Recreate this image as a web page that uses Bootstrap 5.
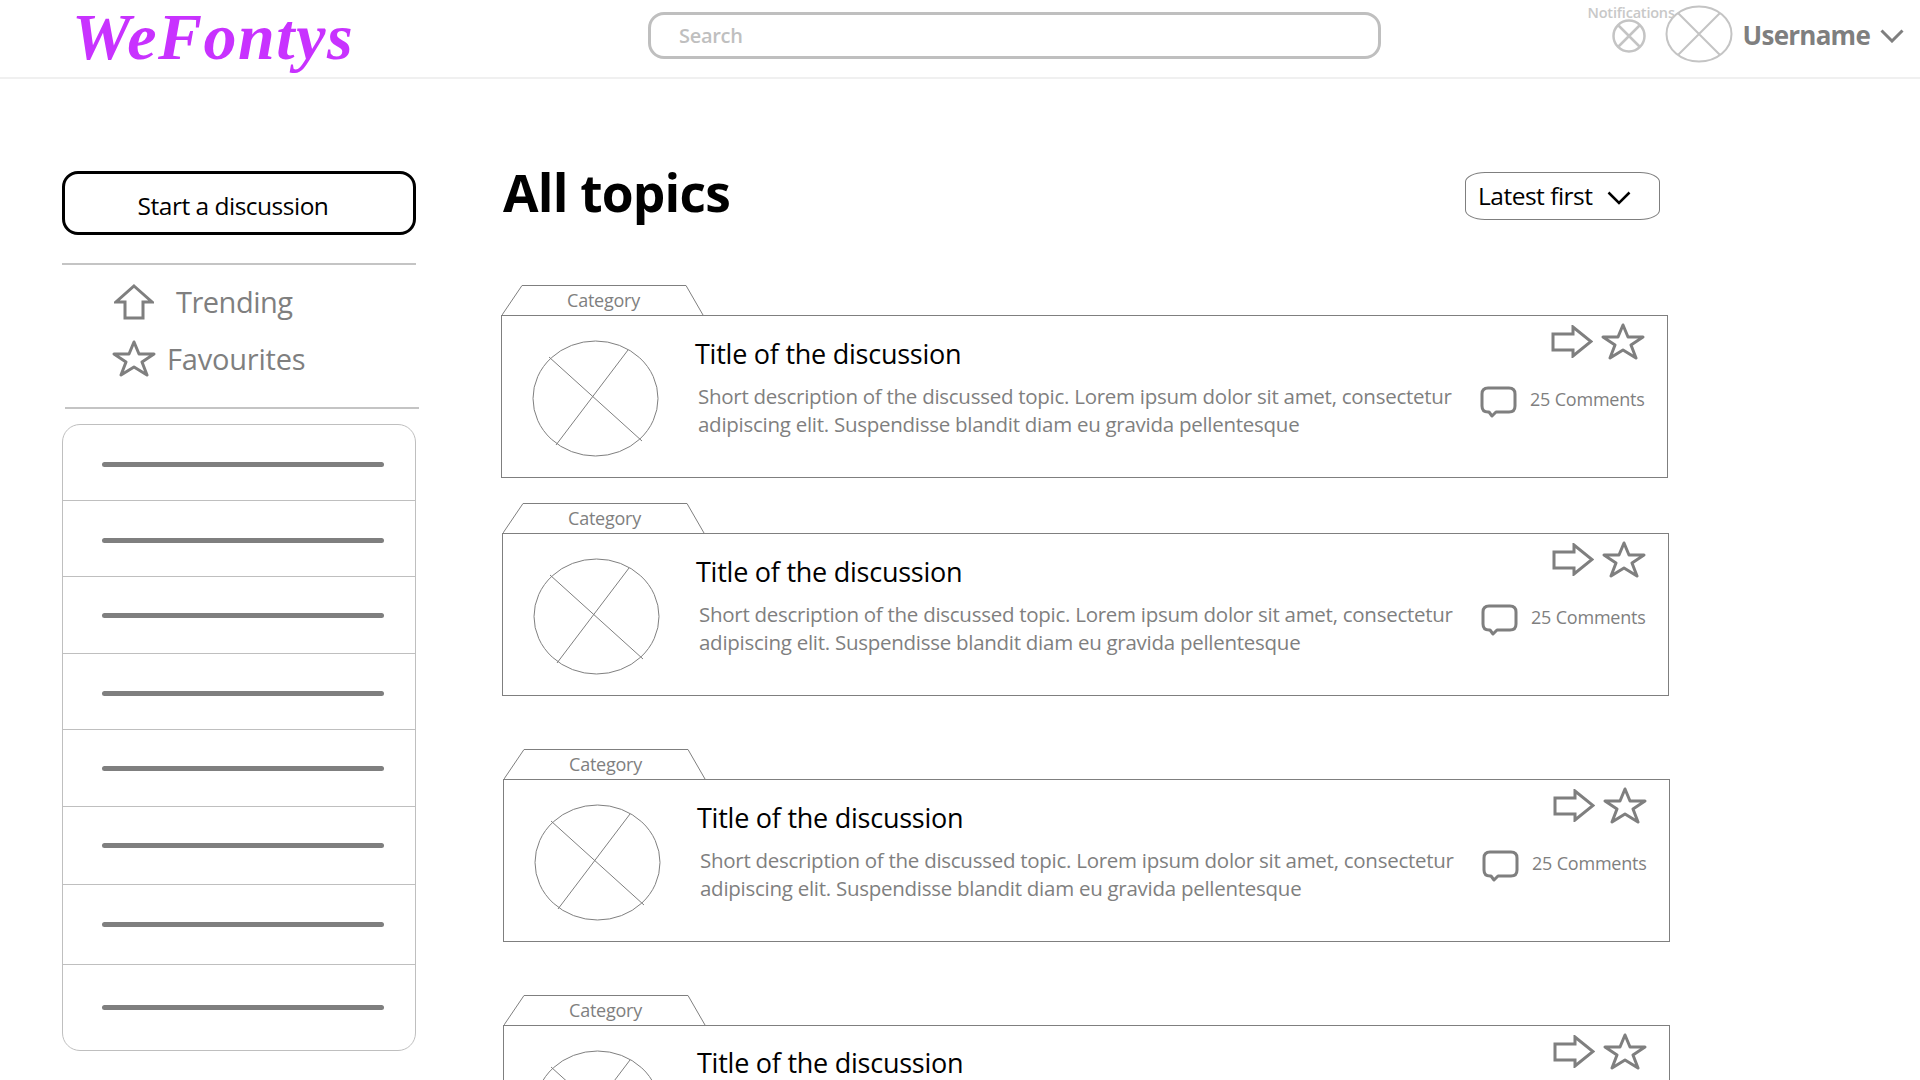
<!DOCTYPE html>
<html lang="en">
<head>
<meta charset="utf-8">
<title>WeFontys</title>
<link rel="stylesheet" href="https://cdn.jsdelivr.net/npm/bootstrap@5.3.0/dist/css/bootstrap.min.css">
<style>
html,body{height:1080px;overflow:hidden;background:#fff}
body{font-family:"Open Sans","Noto Sans",sans-serif;color:#000}
.topbar{height:79px;border-bottom:2px solid #f0f0f0;padding:0 16px 6px 0}
.brand-box{width:579px;margin-left:72px;align-self:flex-start}
.brand-text{font-family:"Liberation Serif",serif;font-style:italic;font-weight:700;font-size:66px;line-height:74px;letter-spacing:1.500px;color:#c832ff;display:block}
.search-box{width:733px;height:47px;border:3px solid #bfbfbf;border-radius:16px;padding-left:28px;color:#bfbfbf;font-size:20px;font-weight:600;letter-spacing:-.3px;margin-left:-3px}
.notif-wrap{width:34px;height:34px}
.notif-label{top:-15px;left:-24px;font-size:14.5px;line-height:18px;font-weight:600;color:#c8c8c8;letter-spacing:-.2px}
.avatar-top{margin:-4px 0 0 19px}
.user-name{font-size:26px;font-weight:700;color:#7f7f7f;margin-left:10px;letter-spacing:-.75px}
.chev-top{margin-left:10px}
.side-col{width:354px;margin-left:62px;padding-top:92px}
.start-btn{height:64px;border:3px solid #000;border-radius:16px;font-size:24.5px;letter-spacing:-.5px;background:#fff;color:#000;padding:6px 12px 0 0}
.side-rule{height:2px;background:#c4c4c4}
.rule-a{margin-top:28px}
.rule-b{margin-top:20px;transform:translateX(3px)}
.side-links{padding:8px 0 0 52px;color:#7f7f7f;font-size:29px;letter-spacing:-.5px;line-height:44px}
.link-row{height:57px}
.link-text-a{margin-left:22px}
.link-text-b{margin-left:11px;letter-spacing:-.2px}
.star-side{margin-left:-2px}
.list-box{margin-top:15px;height:627px;border:1px solid #bfbfbf;border-radius:18px;overflow:hidden}
.list-row{border-bottom:1px solid #bfbfbf;padding-left:39px}
.list-row:last-child{border-bottom:0}
.list-bar{width:282px;height:5px;background:#7f7f7f;border-radius:3px}
.bar-low{padding-top:3px}
.h76{height:76px}.h77{height:77px}.h78{height:78px}.h80{height:80px}.h87{flex:1}
.main-col{width:1167px;margin-left:85px;padding-top:92px}
.head-row{height:114px;padding-right:8px}
.page-title{font-size:51.5px;font-weight:700;line-height:70px;margin:-14px 0 0 2px;letter-spacing:-.8px}
.sort-box{width:195px;height:48px;border:1px solid #7f7f7f;border-radius:20px/10px;font-size:24.5px;padding-left:12px;letter-spacing:-.5px;margin-top:1px}
.sort-chev{margin:4px 0 0 14px}
.topic-wrap{margin-bottom:53px}
.topic-first{margin-bottom:25px}
.topic-last{margin-bottom:0}
.shift-a{margin:0 -1px 53px 1px}
.shift-b{margin-left:2px;margin-right:-2px}
.tab-shape{width:202px;height:30px;margin-left:1px;color:#7f7f7f;font-size:18px;letter-spacing:-.25px}
.tab-svg{left:0;top:0}
.tab-text{line-height:30px;padding-left:1px}
.topic-box{height:163px;border:1px solid #7f7f7f;background:#fff}
.box-cut{height:55px;border-bottom:0;overflow:hidden}
.thumb{margin:24px 0 0 30px;flex:none}
.topic-main{margin-left:36px;padding-top:20px}
.topic-title{font-size:27px;line-height:36px;margin:0;font-weight:400;letter-spacing:-.25px}
.title-tight{line-height:30px;margin-top:2px}
.topic-desc{font-size:20.5px;line-height:28px;color:#7f7f7f;margin:10px 0 0 3px;white-space:nowrap;letter-spacing:-.27px}
.topic-side{margin-left:auto;padding-right:22px;width:187px;padding-top:6px;color:#7f7f7f}
.icon-row{gap:8px;height:38px}
.comment-row{margin-top:26px;font-size:18px;letter-spacing:-.2px;white-space:nowrap}
.comment-text{margin:0 0 0 13px}
</style>
</head>
<body>
<svg width="0" height="0" class="position-absolute">
  <symbol id="i-star" viewBox="0 0 44 37"><polygon points="22,2 27,14 42,14 30,22 35,35 22,27 9,35 14,22 2,14 17,14" fill="none" stroke="#7f7f7f" stroke-width="3" stroke-linejoin="round"/></symbol>
  <symbol id="i-arrow" viewBox="0 0 42 33"><polygon points="2,9 22,9 22,2 40,16.5 22,31 22,25 2,25" fill="none" stroke="#7f7f7f" stroke-width="3"/></symbol>
  <symbol id="i-chat" viewBox="0 0 37 32"><path d="M8 2H29Q35 2 35 8V20Q35 26 29 26H16L12 30 9 26H8Q2 26 2 20V8Q2 2 8 2Z" fill="none" stroke="#7f7f7f" stroke-width="3" stroke-linejoin="round"/></symbol>
  <symbol id="i-thumb" viewBox="0 0 127 117"><ellipse cx="63.5" cy="58.5" rx="62.5" ry="57.500" fill="none" stroke="#7f7f7f" stroke-width="1"/><path d="M17 17 110 101M96 10 24 105" stroke="#7f7f7f" stroke-width="1" fill="none"/></symbol>
</svg>

<header class="topbar d-flex align-items-center">
  <div class="brand-box"><span class="brand-text">WeFontys</span></div>
  <div class="search-box d-flex align-items-center">Search</div>
  <div class="ms-auto d-flex align-items-center">
    <div class="notif-wrap position-relative">
      <span class="notif-label position-absolute">Notifications</span>
      <svg width="34" height="34" viewBox="0 0 34 34" class="d-block"><circle cx="17" cy="17" r="15.500" fill="none" stroke="#c4c4c4" stroke-width="2.500"/><path d="M6 6 28 28M28 6 6 28" stroke="#c4c4c4" stroke-width="2.500" fill="none"/></svg>
    </div>
    <svg width="68" height="58" viewBox="0 0 68 58" class="avatar-top"><ellipse cx="34" cy="29" rx="32.500" ry="27.500" fill="none" stroke="#c4c4c4" stroke-width="2"/><path d="M13 8 55 50M55 8 13 50" stroke="#c4c4c4" stroke-width="2" fill="none"/></svg>
    <span class="user-name">Username</span>
    <svg width="24" height="14" viewBox="0 0 24 14" class="chev-top"><path d="M1.500 1.500 12 12 22.500 1.500" fill="none" stroke="#7f7f7f" stroke-width="3"/></svg>
  </div>
</header>

<div class="d-flex">
  <aside class="side-col">
    <button type="button" class="btn start-btn w-100">Start a discussion</button>
    <div class="side-rule rule-a"></div>
    <div class="side-links">
      <div class="link-row d-flex align-items-center">
        <svg width="40" height="36" viewBox="0 0 40 36"><polygon points="20,2 38,18 29,18 29,34 11,34 11,18 2,18" fill="none" stroke="#7f7f7f" stroke-width="3"/></svg>
        <span class="link-text-a">Trending</span>
      </div>
      <div class="link-row d-flex align-items-center">
        <svg width="44" height="37" class="star-side"><use href="#i-star"/></svg>
        <span class="link-text-b">Favourites</span>
      </div>
    </div>
    <div class="side-rule rule-b"></div>
    <div class="list-box d-flex flex-column">
      <div class="list-row h76 bar-low d-flex align-items-center"><div class="list-bar"></div></div>
      <div class="list-row h76 bar-low d-flex align-items-center"><div class="list-bar"></div></div>
      <div class="list-row h77 d-flex align-items-center"><div class="list-bar"></div></div>
      <div class="list-row h76 bar-low d-flex align-items-center"><div class="list-bar"></div></div>
      <div class="list-row h77 d-flex align-items-center"><div class="list-bar"></div></div>
      <div class="list-row h78 d-flex align-items-center"><div class="list-bar"></div></div>
      <div class="list-row h80 d-flex align-items-center"><div class="list-bar"></div></div>
      <div class="list-row h87 d-flex align-items-center"><div class="list-bar"></div></div>
    </div>
  </aside>

  <main class="main-col">
    <div class="head-row d-flex justify-content-between align-items-start">
      <h1 class="page-title">All topics</h1>
      <div class="sort-box d-flex align-items-center">Latest first
        <svg width="24" height="14" viewBox="0 0 24 14" class="sort-chev"><path d="M1.500 1.500 12 12 22.500 1.500" fill="none" stroke="#000" stroke-width="2.500"/></svg>
      </div>
    </div>

    <section class="topic-wrap topic-first">
      <div class="tab-shape position-relative text-center"><svg class="tab-svg position-absolute" width="202" height="30"><path d="M0 30 20 .5H184L201 30" fill="none" stroke="#7f7f7f" stroke-width="1"/></svg><div class="tab-text position-relative">Category</div></div>
      <article class="topic-box d-flex">
        <svg class="thumb" width="127" height="117"><use href="#i-thumb"/></svg>
        <div class="topic-main">
          <h2 class="topic-title">Title of the discussion</h2>
          <p class="topic-desc">Short description of the discussed topic. Lorem ipsum dolor sit amet, consectetur<br>adipiscing elit. Suspendisse blandit diam eu gravida pellentesque</p>
        </div>
        <div class="topic-side d-flex flex-column align-items-end">
          <div class="icon-row d-flex align-items-center"><svg width="42" height="33"><use href="#i-arrow"/></svg><svg width="44" height="37"><use href="#i-star"/></svg></div>
          <div class="comment-row d-flex align-items-start align-self-start"><svg width="37" height="32"><use href="#i-chat"/></svg><span class="comment-text">25 Comments</span></div>
        </div>
      </article>
    </section>

    <section class="topic-wrap shift-a">
      <div class="tab-shape position-relative text-center"><svg class="tab-svg position-absolute" width="202" height="30"><path d="M0 30 20 .5H184L201 30" fill="none" stroke="#7f7f7f" stroke-width="1"/></svg><div class="tab-text position-relative">Category</div></div>
      <article class="topic-box d-flex">
        <svg class="thumb" width="127" height="117"><use href="#i-thumb"/></svg>
        <div class="topic-main">
          <h2 class="topic-title">Title of the discussion</h2>
          <p class="topic-desc">Short description of the discussed topic. Lorem ipsum dolor sit amet, consectetur<br>adipiscing elit. Suspendisse blandit diam eu gravida pellentesque</p>
        </div>
        <div class="topic-side d-flex flex-column align-items-end">
          <div class="icon-row d-flex align-items-center"><svg width="42" height="33"><use href="#i-arrow"/></svg><svg width="44" height="37"><use href="#i-star"/></svg></div>
          <div class="comment-row d-flex align-items-start align-self-start"><svg width="37" height="32"><use href="#i-chat"/></svg><span class="comment-text">25 Comments</span></div>
        </div>
      </article>
    </section>

    <section class="topic-wrap shift-b">
      <div class="tab-shape position-relative text-center"><svg class="tab-svg position-absolute" width="202" height="30"><path d="M0 30 20 .5H184L201 30" fill="none" stroke="#7f7f7f" stroke-width="1"/></svg><div class="tab-text position-relative">Category</div></div>
      <article class="topic-box d-flex">
        <svg class="thumb" width="127" height="117"><use href="#i-thumb"/></svg>
        <div class="topic-main">
          <h2 class="topic-title">Title of the discussion</h2>
          <p class="topic-desc">Short description of the discussed topic. Lorem ipsum dolor sit amet, consectetur<br>adipiscing elit. Suspendisse blandit diam eu gravida pellentesque</p>
        </div>
        <div class="topic-side d-flex flex-column align-items-end">
          <div class="icon-row d-flex align-items-center"><svg width="42" height="33"><use href="#i-arrow"/></svg><svg width="44" height="37"><use href="#i-star"/></svg></div>
          <div class="comment-row d-flex align-items-start align-self-start"><svg width="37" height="32"><use href="#i-chat"/></svg><span class="comment-text">25 Comments</span></div>
        </div>
      </article>
    </section>

    <section class="topic-last shift-b">
      <div class="tab-shape position-relative text-center"><svg class="tab-svg position-absolute" width="202" height="30"><path d="M0 30 20 .5H184L201 30" fill="none" stroke="#7f7f7f" stroke-width="1"/></svg><div class="tab-text position-relative">Category</div></div>
      <article class="topic-box box-cut d-flex">
        <svg class="thumb" width="127" height="117"><use href="#i-thumb"/></svg>
        <div class="topic-main">
          <h2 class="topic-title title-tight">Title of the discussion</h2>
        </div>
        <div class="topic-side d-flex flex-column align-items-end">
          <div class="icon-row d-flex align-items-center"><svg width="42" height="33"><use href="#i-arrow"/></svg><svg width="44" height="37"><use href="#i-star"/></svg></div>
        </div>
      </article>
    </section>
  </main>
</div>
<script src="https://cdn.jsdelivr.net/npm/bootstrap@5.3.0/dist/js/bootstrap.bundle.min.js"></script>
</body>
</html>
